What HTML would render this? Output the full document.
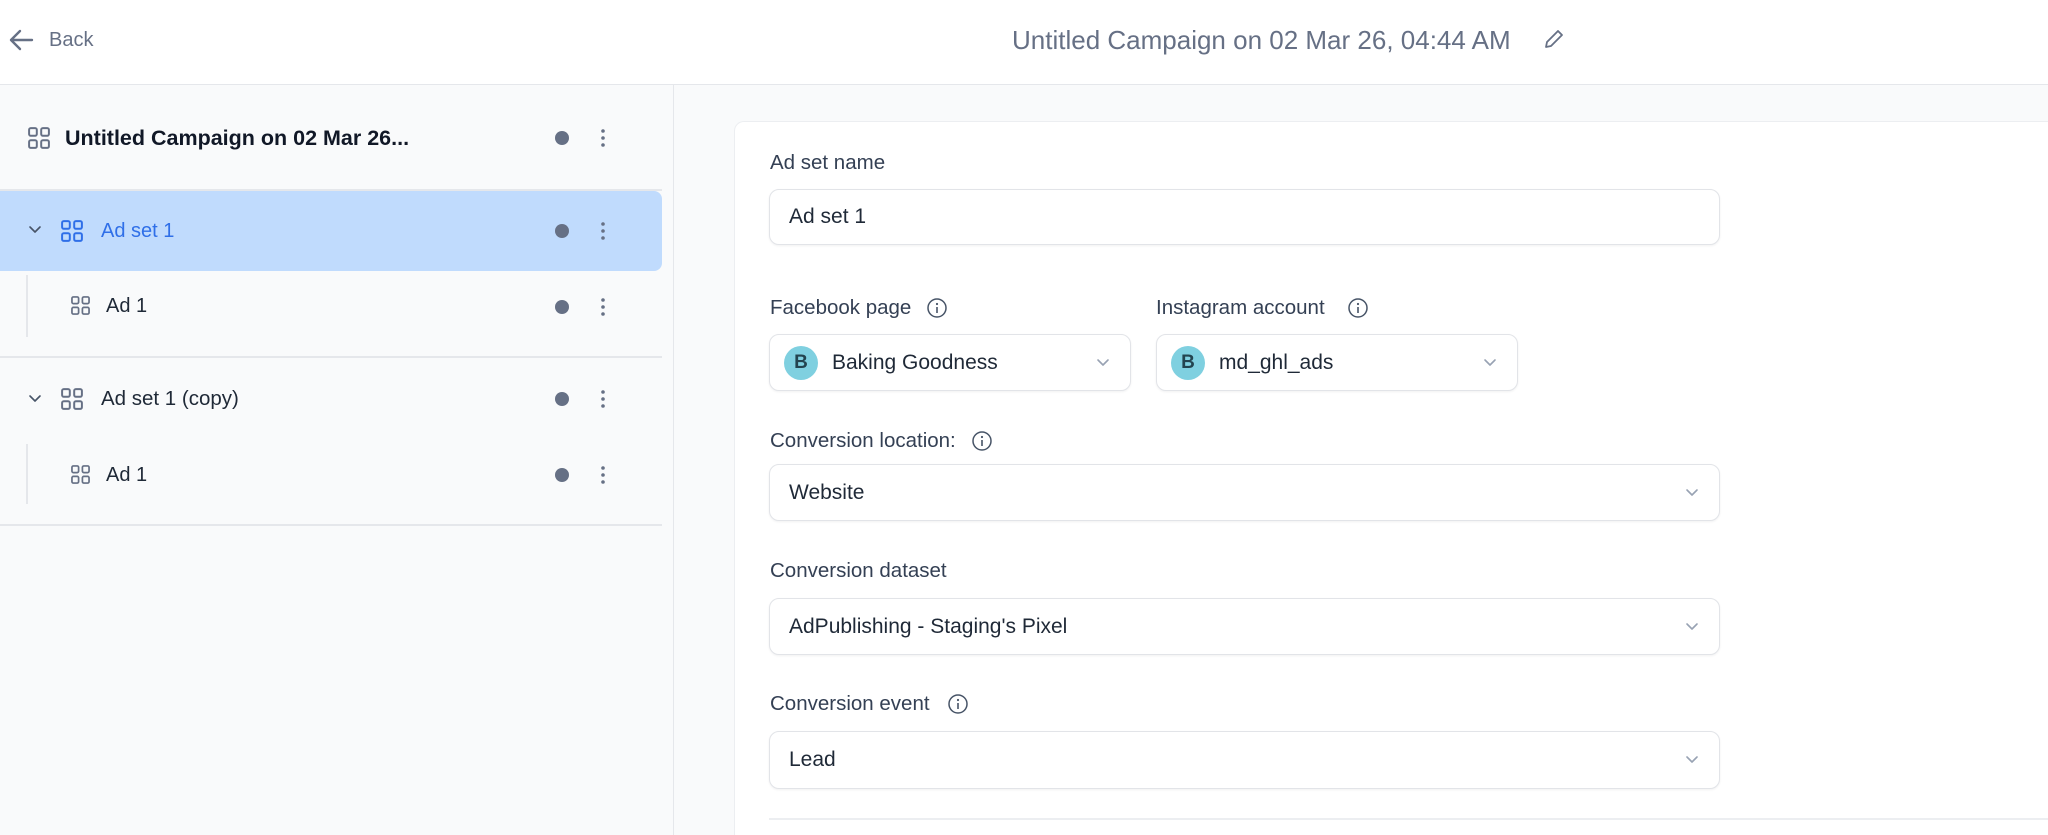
<!DOCTYPE html>
<html><head><meta charset="utf-8"><style>
*{box-sizing:border-box;margin:0;padding:0}
html,body{width:2048px;height:835px;overflow:hidden}
body{font-family:"Liberation Sans",sans-serif;background:#f9fafb;position:relative;color:#1f2937}
.a{position:absolute}
.hdr{left:0;top:0;width:2048px;height:85px;background:#fff;border-bottom:1px solid #e5e7eb}
.side{left:0;top:85px;width:674px;height:750px;background:#f9fafb;border-right:1px solid #e5e7eb}
.card{left:734px;top:121px;width:1330px;height:720px;background:#fff;border:1px solid #eceef1;border-bottom:none;border-radius:10px 10px 0 0}
.row{font-size:20px;line-height:24px}
.dot{width:14px;height:14px;border-radius:50%;background:#667085}
.div{height:2px;background:#e5e7eb;left:0;width:662px}
.lbl{font-size:20.5px;color:#344054;line-height:24px}
.box{background:#fff;border:1px solid #e2e4e8;border-radius:10px;box-shadow:0 1px 2px rgba(16,24,40,.06);font-size:21px;color:#1f2937;display:flex;align-items:center;padding-left:19px}
.chev{position:absolute;right:20px;top:50%;margin-top:-5px}
.av{width:34px;height:34px;border-radius:50%;background:#7fd0e0;color:#23444f;font-weight:bold;font-size:19px;display:flex;align-items:center;justify-content:center;margin-right:14px;margin-left:-5px}
</style></head><body>
<div class="a hdr"></div>
<svg class="a" style="left:8px;top:28px" width="26" height="24" viewBox="0 0 26 24"><path d="M24 12H3M12 3L3 12l9 9" fill="none" stroke="#667085" stroke-width="2.4" stroke-linecap="round" stroke-linejoin="round"/></svg>
<div class="a" style="left:49px;top:29px;font-size:20px;color:#667085">Back</div>
<div class="a" style="left:1012px;top:25px;font-size:26px;color:#667085;white-space:nowrap">Untitled Campaign on 02 Mar 26, 04:44 AM</div>
<svg class="a" style="left:1543px;top:28px" width="22" height="22" viewBox="0 0 22 22"><path d="M15 3l4 4L8 18l-5 1 1-5z" fill="none" stroke="#667085" stroke-width="1.8" stroke-linejoin="round"/></svg>
<div class="a side"></div>

<svg width="0" height="0" style="position:absolute"><defs><symbol id="g" viewBox="0 0 20 20"><rect x="1" y="1" width="7" height="7" rx="1.5" fill="none" stroke="currentColor" stroke-width="1.8"/><rect x="12" y="1" width="7" height="7" rx="1.5" fill="none" stroke="currentColor" stroke-width="1.8"/><rect x="1" y="12" width="7" height="7" rx="1.5" fill="none" stroke="currentColor" stroke-width="1.8"/><rect x="12" y="12" width="7" height="7" rx="1.5" fill="none" stroke="currentColor" stroke-width="1.8"/></symbol>
<symbol id="k" viewBox="0 0 6 20"><circle cx="3" cy="3" r="1.8" fill="#667085"/><circle cx="3" cy="10" r="1.8" fill="#667085"/><circle cx="3" cy="17" r="1.8" fill="#667085"/></symbol>
<symbol id="c" viewBox="0 0 14 10"><path d="M2 2l5 5 5-5" fill="none" stroke="currentColor" stroke-width="1.6" stroke-linecap="round" stroke-linejoin="round"/></symbol></defs></svg>

<svg class="a" style="left:28px;top:126px;color:#667085" width="22" height="24"><use href="#g" width="22" height="22" y="1"/></svg>
<div class="a row" style="left:65px;top:126px;font-weight:bold;color:#111827;font-size:21.5px">Untitled Campaign on 02 Mar 26...</div>
<div class="a dot" style="left:555px;top:131px"></div>
<svg class="a" style="left:600px;top:128px" width="6" height="20"><use href="#k"/></svg>
<div class="a div" style="top:189px"></div>

<div class="a" style="left:0;top:191px;width:662px;height:80px;background:#c0dbfd;border-radius:0 8px 8px 0"></div>
<svg class="a" style="left:28px;top:225px;color:#475467" width="14" height="10"><use href="#c"/></svg>
<svg class="a" style="left:61px;top:220px;color:#2f6fe8" width="22" height="22"><use href="#g" width="22" height="22"/></svg>
<div class="a row" style="left:101px;top:219px;color:#2f6fe8">Ad set 1</div>
<div class="a dot" style="left:555px;top:224px"></div>
<svg class="a" style="left:600px;top:221px" width="6" height="20"><use href="#k"/></svg>

<div class="a" style="left:26px;top:275px;width:2px;height:62px;background:#e5e7eb"></div>
<svg class="a" style="left:71px;top:296px;color:#667085" width="19" height="19"><use href="#g" width="19" height="19"/></svg>
<div class="a row" style="left:106px;top:294px;color:#1f2937">Ad 1</div>
<div class="a dot" style="left:555px;top:300px"></div>
<svg class="a" style="left:600px;top:297px" width="6" height="20"><use href="#k"/></svg>
<div class="a div" style="top:356px"></div>

<svg class="a" style="left:28px;top:394px;color:#475467" width="14" height="10"><use href="#c"/></svg>
<svg class="a" style="left:61px;top:388px;color:#667085" width="22" height="22"><use href="#g" width="22" height="22"/></svg>
<div class="a row" style="left:101px;top:387px;color:#1f2937;font-size:20.5px">Ad set 1 (copy)</div>
<div class="a dot" style="left:555px;top:392px"></div>
<svg class="a" style="left:600px;top:389px" width="6" height="20"><use href="#k"/></svg>

<div class="a" style="left:26px;top:444px;width:2px;height:60px;background:#e5e7eb"></div>
<svg class="a" style="left:71px;top:465px;color:#667085" width="19" height="19"><use href="#g" width="19" height="19"/></svg>
<div class="a row" style="left:106px;top:463px;color:#1f2937">Ad 1</div>
<div class="a dot" style="left:555px;top:468px"></div>
<svg class="a" style="left:600px;top:465px" width="6" height="20"><use href="#k"/></svg>
<div class="a div" style="top:524px"></div>

<div class="a card"></div>
<div class="a lbl" style="left:770px;top:151px">Ad set name</div>
<div class="a box" style="left:769px;top:189px;width:951px;height:56px">Ad set 1</div>

<div class="a lbl" style="left:770px;top:296px">Facebook page</div>
<svg class="a" style="left:926px;top:297px" width="22" height="22" viewBox="0 0 22 22"><circle cx="11" cy="11" r="9" fill="none" stroke="#475467" stroke-width="1.5"/><path d="M11 10v6" stroke="#475467" stroke-width="1.6"/><circle cx="11" cy="7" r="1.1" fill="#475467"/></svg>
<div class="a lbl" style="left:1156px;top:296px">Instagram account</div>
<svg class="a" style="left:1347px;top:297px" width="22" height="22" viewBox="0 0 22 22"><circle cx="11" cy="11" r="9" fill="none" stroke="#475467" stroke-width="1.5"/><path d="M11 10v6" stroke="#475467" stroke-width="1.6"/><circle cx="11" cy="7" r="1.1" fill="#475467"/></svg>
<div class="a box" style="left:769px;top:334px;width:362px;height:57px"><div class="av">B</div>Baking Goodness<svg class="chev" style="color:#98a2b3" width="14" height="10"><use href="#c"/></svg></div>
<div class="a box" style="left:1156px;top:334px;width:362px;height:57px"><div class="av">B</div>md_ghl_ads<svg class="chev" style="color:#98a2b3" width="14" height="10"><use href="#c"/></svg></div>

<div class="a lbl" style="left:770px;top:429px">Conversion location:</div>
<svg class="a" style="left:971px;top:430px" width="22" height="22" viewBox="0 0 22 22"><circle cx="11" cy="11" r="9" fill="none" stroke="#475467" stroke-width="1.5"/><path d="M11 10v6" stroke="#475467" stroke-width="1.6"/><circle cx="11" cy="7" r="1.1" fill="#475467"/></svg>
<div class="a box" style="left:769px;top:464px;width:951px;height:57px">Website<svg class="chev" style="color:#98a2b3" width="14" height="10"><use href="#c"/></svg></div>

<div class="a lbl" style="left:770px;top:559px">Conversion dataset</div>
<div class="a box" style="left:769px;top:598px;width:951px;height:57px">AdPublishing - Staging's Pixel<svg class="chev" style="color:#98a2b3" width="14" height="10"><use href="#c"/></svg></div>

<div class="a lbl" style="left:770px;top:692px">Conversion event</div>
<svg class="a" style="left:947px;top:693px" width="22" height="22" viewBox="0 0 22 22"><circle cx="11" cy="11" r="9" fill="none" stroke="#475467" stroke-width="1.5"/><path d="M11 10v6" stroke="#475467" stroke-width="1.6"/><circle cx="11" cy="7" r="1.1" fill="#475467"/></svg>
<div class="a box" style="left:769px;top:731px;width:951px;height:58px">Lead<svg class="chev" style="color:#98a2b3" width="14" height="10"><use href="#c"/></svg></div>
<div class="a" style="left:769px;top:818px;width:1279px;height:2px;background:#eceef1"></div>
</body></html>
